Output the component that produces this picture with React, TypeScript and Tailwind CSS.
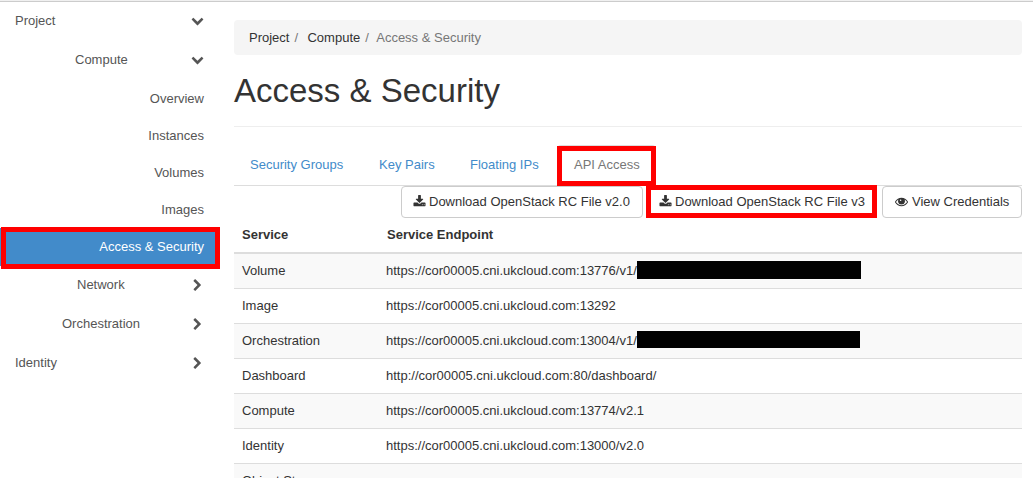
import React from "react";

const PATHS = {
  download:
    "M1344 1344q0-26-19-45t-45-19-45 19-19 45 19 45 45 19 45-19 19-45zm256 0q0-26-19-45t-45-19-45 19-19 45 19 45 45 19 45-19 19-45zm128-224v320q0 40-28 68t-68 28h-1472q-40 0-68-28t-28-68v-320q0-40 28-68t68-28h465l135 136q58 56 136 56t136-56l136-136h464q40 0 68 28t28 68zm-325-569q17 41-14 70l-448 448q-18 19-45 19t-45-19l-448-448q-31-29-14-70 17-39 59-39h256v-448q0-26 19-45t45-19h256q26 0 45 19t19 45v448h256q42 0 59 39z",
  eye: "M1664 960q-152-236-381-353 61 104 61 225 0 185-131.5 316.5t-316.5 131.5-316.5-131.5-131.5-316.5q0-121 61-225-229 117-381 353 133 205 333.5 326.5t434.5 121.5 434.5-121.5 333.5-326.5zm-720-384q0-20-14-34t-34-14q-125 0-214.5 89.5t-89.5 214.5q0 20 14 34t34 14 34-14 14-34q0-86 61-147t147-61q20 0 34-14t14-34zm848 384q0 34-20 69-140 230-376.5 368.5t-499.5 138.5-499.5-139-376.5-368q-20-35-20-69t20-69q140-229 376.5-368t499.5-139 499.5 139 376.5 368q20 35 20 69z",
  down: "M1683 808l-742 741q-19 19-45 19t-45-19l-742-741q-19-19-19-45.5t19-45.5l166-165q19-19 45-19t45 19l531 531 531-531q19-19 45-19t45 19l166 165q19 19 19 45.5t-19 45.5z",
  right:
    "M1363 877l-742 742q-19 19-45 19t-45-19l-166-166q-19-19-19-45t19-45l531-531-531-531q-19-19-19-45t19-45l166-166q19-19 45-19t45 19l742 742q19 19 19 45t-19 45z",
};

function Icon({ name, className }: { name: keyof typeof PATHS; className: string }) {
  return (
    <svg viewBox="0 0 1792 1792" fill="currentColor" className={`shrink-0 ${className}`}>
      <path d={PATHS[name]} />
      {name === "eye" && (
        <>
          <circle cx="896" cy="850" r="440" />
          <circle cx="770" cy="720" r="110" fill="#fff" />
        </>
      )}
    </svg>
  );
}

function Group({ label, icon, className }: { label: string; icon: "down" | "right"; className: string }) {
  return (
    <div className={`flex h-[39px] items-center justify-between pr-[30px] ${className}`}>
      <span>{label}</span>
      <Icon name={icon} className={icon === "down" ? "-mt-px h-[13px] w-[13px]" : "mt-px h-[13px] w-[13px]"} />
    </div>
  );
}

function Sidebar() {
  return (
    <nav className="w-[234px] shrink-0 text-[#555]">
      <Group label="Project" icon="down" className="-mt-px pl-[15px]" />
      <Group label="Compute" icon="down" className="mb-px pl-[75px]" />
      {["Overview", "Instances", "Volumes", "Images"].map((item) => (
        <div key={item} className="flex h-[37px] items-center justify-end pr-[30px]">
          {item}
        </div>
      ))}
      <div className="relative flex h-[38px] w-[219px] items-center justify-end bg-[#428bca] pr-[15px] pb-px text-white">
        Access &amp; Security
        <div className="absolute -top-px -right-px -bottom-[3px] left-px border-5 border-[#f00]" />
      </div>
      <Group label="Network" icon="right" className="-mt-px pl-[77px]" />
      <Group label="Orchestration" icon="right" className="pl-[62px]" />
      <Group label="Identity" icon="right" className="pl-[15px]" />
    </nav>
  );
}

const BUTTON = "relative flex h-8 items-center rounded border border-[#ccc] bg-white text-[#333]";

const ROWS = [
  { service: "Volume", url: "https://cor00005.cni.ukcloud.com:13776/v1/", mask: "w-[224px] h-[18px] mb-0.5" },
  { service: "Image", url: "https://cor00005.cni.ukcloud.com:13292" },
  { service: "Orchestration", url: "https://cor00005.cni.ukcloud.com:13004/v1/", mask: "w-[223px] h-[17px] mb-[3px]" },
  { service: "Dashboard", url: "http://cor00005.cni.ukcloud.com:80/dashboard/" },
  { service: "Compute", url: "https://cor00005.cni.ukcloud.com:13774/v2.1" },
  { service: "Identity", url: "https://cor00005.cni.ukcloud.com:13000/v2.0" },
  { service: "Object Store", url: "" },
];

export default function App() {
  return (
    <div className="h-[478px] w-[1033px] overflow-hidden bg-white font-['Liberation_Sans',Arial,sans-serif] text-[13px] leading-[18px] whitespace-nowrap text-[#333]">
      <div className="h-0.5 border-b border-[#ccc] bg-[#f0f0f0]" />
      <div className="flex">
        <Sidebar />
        <main className="w-[788px] shrink-0 pt-[18px]">
          <div className="flex h-[35px] items-center rounded bg-[#f5f5f5] pl-[15px]">
            <span>Project</span>
            <span className="ml-[5px] w-[13px] text-[#777]">/</span>
            <span>Compute</span>
            <span className="ml-[5px] w-[11px] text-[#777]">/</span>
            <span className="text-[#777]">Access &amp; Security</span>
          </div>
          <h1 className="mt-[16px] h-[56px] border-b border-[#eee] text-[33px] leading-[40px]">Access &amp; Security</h1>
          <div className="mt-[18px] flex h-[41px] border-b border-[#ddd] text-[#428bca]">
            <span className="w-[129px] pt-[11px] pl-4">Security Groups</span>
            <span className="w-[91px] pt-[11px] pl-4">Key Pairs</span>
            <span className="w-[103px] pt-[11px] pl-4">Floating IPs</span>
            <div className="relative h-[41px] w-[99px] rounded-t border border-b-0 border-[#ddd] bg-white pt-[10px] pl-4 text-[#777]">
              API Access
              <div className="absolute -right-px bottom-0 -left-px h-10 border-5 border-[#f00]" />
            </div>
          </div>
          <div className="flex h-8 justify-end">
            <div className={`${BUTTON} w-[242px] pl-[11px]`}>
              <Icon name="download" className="mr-[3px] mb-px h-[13px] w-[13px]" />
              Download OpenStack RC File v2.0
            </div>
            <div className={`${BUTTON} ml-[4px] w-[230px] pl-[11px]`}>
              <Icon name="download" className="mr-[3px] mb-px h-[13px] w-[13px]" />
              Download OpenStack RC File v3
              <div className="absolute -top-[2px] -right-px -bottom-px -left-[2px] border-5 border-[#f00]" />
            </div>
            <div className={`${BUTTON} ml-[5px] w-[140px] pl-3`}>
              <Icon name="eye" className="mr-[4px] mb-px h-[13px] w-[13px]" />
              View Credentials
            </div>
          </div>
          <div className="flex h-[36px] border-b-2 border-[#ddd] pt-[8px] pl-2 font-bold">
            <span className="w-[145px]">Service</span>
            <span>Service Endpoint</span>
          </div>
          {ROWS.map((row) => (
            <div key={row.service} className="flex h-[35px] items-center border-b border-[#ddd] pl-2 odd:bg-white even:bg-[#f9f9f9]">
              <span className="w-36 shrink-0">{row.service}</span>
              <span className="w-[251px] shrink-0">{row.url}</span>
              {row.mask && <span className={`${row.mask} bg-black`} />}
            </div>
          ))}
        </main>
      </div>
    </div>
  );
}
